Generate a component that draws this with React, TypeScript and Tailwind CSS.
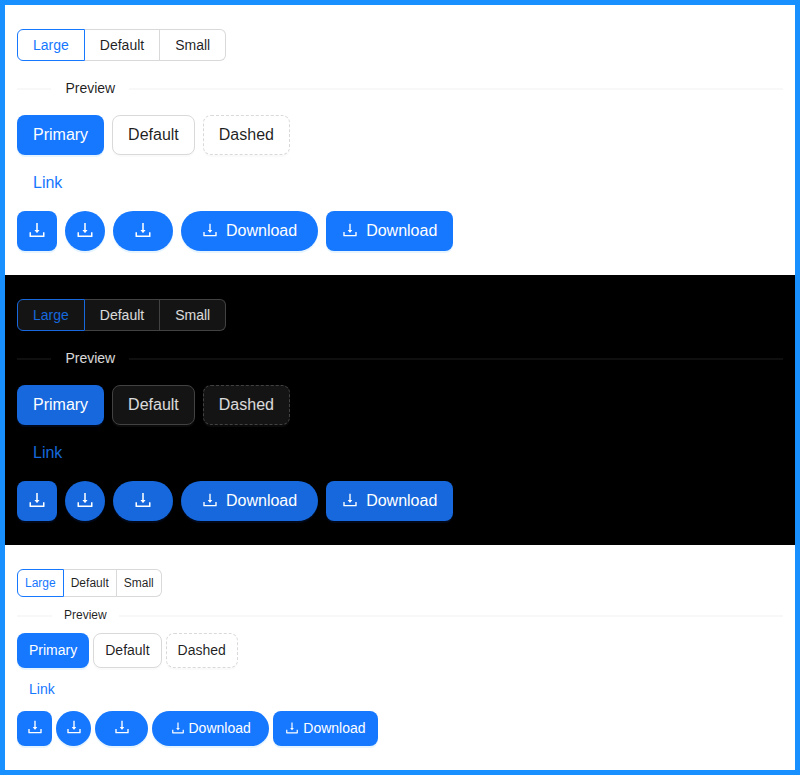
import React from 'react';
import clsx from 'clsx';

type Theme = 'light' | 'dark' | 'compact';

function DownloadIcon({ className }: { className: string }) {
  return (
    <svg viewBox="64 64 896 896" fill="currentColor" aria-hidden="true" className={clsx('block shrink-0', className)}>
      <path d="M505.7 661a8 8 0 0012.6 0l112-141.7c4.1-5.2.4-12.9-6.3-12.9h-74.1V168c0-4.4-3.6-8-8-8h-60c-4.4 0-8 3.6-8 8v338.3H400c-6.7 0-10.4 7.7-6.3 12.9l112 141.8zM878 626h-60c-4.4 0-8 3.6-8 8v154H214V634c0-4.4-3.6-8-8-8h-60c-4.4 0-8 3.6-8 8v198c0 17.7 14.3 32 32 32h684c17.7 0 32-14.3 32-32V634c0-4.4-3.6-8-8-8z" />
    </svg>
  );
}

function SizeGroup({ theme }: { theme: Theme }) {
  const dark = theme === 'dark';
  const compact = theme === 'compact';
  return (
    <div className="flex">
      {['Large', 'Default', 'Small'].map((label, i) => (
        <button
          key={label}
          className={clsx(
            'border-y border-r',
            compact ? 'h-7 px-[7px] text-xs leading-[26px]' : 'h-8 px-[15px] text-sm leading-[30px]',
            dark ? 'bg-[#141414]' : 'bg-white',
            i === 0 && 'rounded-l-md border-l',
            i === 2 && 'rounded-r-md',
            i === 0
              ? dark
                ? 'border-[#1668dc] text-[#1668dc]'
                : 'border-[#1677ff] text-[#1677ff]'
              : dark
                ? 'border-[#424242] text-white/85'
                : 'border-[#d9d9d9] text-black/88',
          )}
        >
          {label}
        </button>
      ))}
    </div>
  );
}

function PreviewDivider({ theme }: { theme: Theme }) {
  const line = clsx('translate-y-1/2 border-t', theme === 'dark' ? 'border-[#fdfdfd]/12' : 'border-[#050505]/6');
  return (
    <div
      className={clsx(
        'flex items-center whitespace-nowrap',
        theme === 'compact' ? 'my-2 text-xs leading-5' : 'my-4 text-sm leading-[22px]',
      )}
    >
      <span className={clsx(line, 'w-[5%]')} />
      <span className="shrink-0 px-[1em]">Preview</span>
      <span className={clsx(line, 'w-[95%]')} />
    </div>
  );
}

type ButtonProps = {
  theme: Theme;
  kind?: 'primary' | 'default' | 'dashed' | 'link';
  shape?: 'square' | 'circle' | 'round';
  icon?: boolean;
  children?: React.ReactNode;
};

function Button({ theme, kind = 'primary', shape = 'square', icon, children }: ButtonProps) {
  const dark = theme === 'dark';
  const compact = theme === 'compact';
  const iconOnly = icon && !children;
  const fixed = iconOnly && shape !== 'round';
  return (
    <button
      className={clsx(
        'flex items-center justify-center border',
        compact ? 'h-[35px] gap-1 pb-px text-sm leading-[22px]' : 'h-10 gap-2 text-base leading-6',
        fixed
          ? compact ? 'w-[35px]' : 'w-10'
          : shape === 'round'
            ? compact ? 'px-[17.5px]' : 'px-5'
            : compact ? 'px-[11px]' : 'px-[15px]',
        shape === 'square' ? 'rounded-lg' : 'rounded-full',
        kind === 'primary' &&
          (dark
            ? 'border-transparent bg-[#1668dc] text-white shadow-[0_2px_0_rgba(0,60,180,0.15)]'
            : 'border-transparent bg-[#1677ff] text-white shadow-[0_2px_0_rgba(5,145,255,0.1)]'),
        kind === 'link' && (dark ? 'border-transparent text-[#1668dc]' : 'border-transparent text-[#1677ff]'),
        (kind === 'default' || kind === 'dashed') &&
          (dark
            ? 'border-[#424242] bg-[#141414] shadow-[0_2px_0_rgba(255,255,255,0.04)]'
            : 'border-[#d9d9d9] bg-white shadow-[0_2px_0_rgba(0,0,0,0.02)]'),
        kind === 'dashed' && 'border-dashed',
      )}
    >
      {icon && (
        <DownloadIcon
          className={
            iconOnly
              ? compact ? '-mt-0.5 size-4' : '-mt-0.5 size-[18px]'
              : compact ? 'size-3.5' : '-mt-0.5 size-4'
          }
        />
      )}
      {children && <span>{children}</span>}
    </button>
  );
}

function Panel({ theme }: { theme: Theme }) {
  const row = clsx('flex', theme === 'compact' ? 'gap-1' : 'gap-2');
  return (
    <section className={clsx('px-3 py-6', theme === 'dark' ? 'bg-black text-white/85' : 'bg-white text-black/88')}>
      <SizeGroup theme={theme} />
      <PreviewDivider theme={theme} />
      <div className={clsx('flex flex-col', theme === 'compact' ? 'gap-1' : 'gap-2')}>
        <div className={row}>
          <Button theme={theme}>Primary</Button>
          <Button theme={theme} kind="default">Default</Button>
          <Button theme={theme} kind="dashed">Dashed</Button>
        </div>
        <div className={row}>
          <Button theme={theme} kind="link">Link</Button>
        </div>
        <div className={row}>
          <Button theme={theme} icon />
          <Button theme={theme} icon shape="circle" />
          <Button theme={theme} icon shape="round" />
          <Button theme={theme} icon shape="round">Download</Button>
          <Button theme={theme} icon>Download</Button>
        </div>
      </div>
    </section>
  );
}

export default function App() {
  return (
    <main className="h-[775px] w-[800px] overflow-hidden border-[5px] border-[#1890ff] font-['Liberation_Sans',Arial,sans-serif]">
      <Panel theme="light" />
      <Panel theme="dark" />
      <Panel theme="compact" />
    </main>
  );
}
